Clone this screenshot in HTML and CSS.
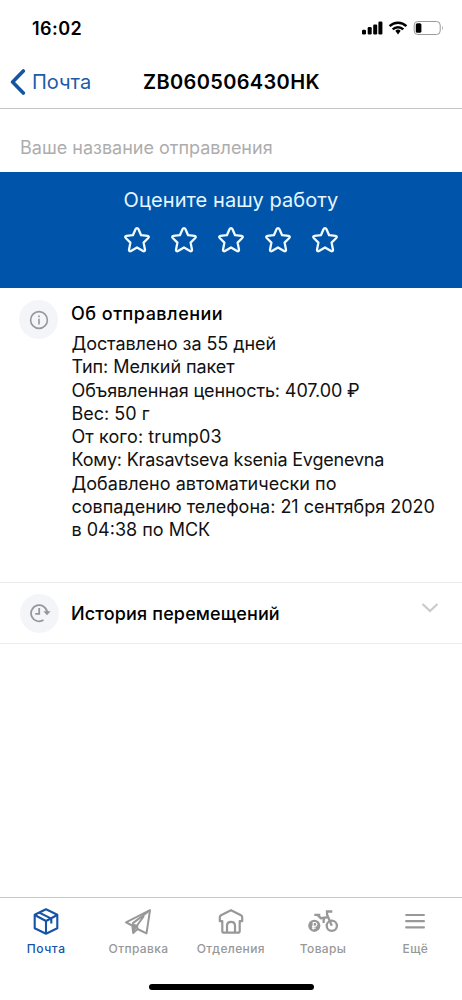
FILE: index.html
```html
<!DOCTYPE html>
<html lang="ru">
<head>
<meta charset="utf-8">
<meta name="viewport" content="width=device-width">
<title>Почта</title>
<link rel="stylesheet" href="styles.css">
</head>
<body>
<div class="screen">
  <div class="status">
    <span class="time">16:02</span>
    <svg class="status-icons" width="84" height="16" viewBox="0 0 84 16">
      <g fill="#000">
        <rect x="1" y="9.7" width="4" height="4.8" rx="1.2"/>
        <rect x="6.7" y="7" width="4" height="7.5" rx="1.2"/>
        <rect x="12.2" y="4.5" width="4" height="10" rx="1.2"/>
        <rect x="17.4" y="1.5" width="4" height="13" rx="1.2"/>
        <path d="M34.3 10.8a4 4 0 0 1 5.4 0L37 14.4z"/>
      </g>
      <g fill="none" stroke="#000" stroke-width="2.5">
        <path d="M28.6 6.1a12 12 0 0 1 16.8 0"/>
        <path d="M31.7 9.3a7.6 7.6 0 0 1 10.6 0"/>
      </g>
      <rect x="53.2" y="1.5" width="26" height="13" rx="3.6" fill="none" stroke="#999"/>
      <rect x="54.8" y="3.2" width="5.6" height="9.6" rx="1.6" fill="#000"/>
      <path d="M81 5.7q1.6 2.3 0 4.6z" fill="#888"/>
    </svg>
  </div>

  <header class="nav">
    <a class="back">
      <svg width="16" height="26" viewBox="0 0 16 26"><path d="M13.3 2L2.6 13l10.7 11" fill="none" stroke="#1554a0" stroke-width="3.6" stroke-linecap="round" stroke-linejoin="round"/></svg>
      <span>Почта</span>
    </a>
    <h1 class="title">ZB060506430HK</h1>
  </header>

  <div class="name-field">Ваше название отправления</div>

  <section class="rate">
    <div class="rate-title">Оцените нашу работу</div>
    <div class="stars">
      <svg class="star" viewBox="0 0 28 28"><use href="#star"/></svg>
      <svg class="star" viewBox="0 0 28 28"><use href="#star"/></svg>
      <svg class="star" viewBox="0 0 28 28"><path id="star" d="M14 2.2c.7 0 1.2.4 1.5 1l2.6 6 6.4.6c1.300.2 1.700 1.400.8 2.200l-4.700 4.600 1.400 7.100c.2 1.300-.9 2-2 1.400L14 21.500l-6 3.600c-1.100.6-2.200-.1-2-1.400l1.400-7.100L2.700 12c-.9-.8-.5-2 .8-2.200l6.400-.6 2.600-6c.3-.6.8-1 1.500-1z"/></svg>
      <svg class="star" viewBox="0 0 28 28"><use href="#star"/></svg>
      <svg class="star" viewBox="0 0 28 28"><use href="#star"/></svg>
    </div>
  </section>

  <section class="info">
    <div class="bubble">
      <svg width="20" height="20" viewBox="0 0 20 20" fill="none" stroke="#96969b" stroke-width="1.6"><circle cx="10" cy="10" r="8.4"/><path d="M10 8.7v5.7"/><path d="M10 5.4v1.9"/></svg>
    </div>
    <div class="info-body">
      <h2 class="info-title">Об отправлении</h2>
      <p class="l1">Доставлено за 55 дней</p>
      <p class="l2">Тип: Мелкий пакет</p>
      <p class="l3">Объявленная ценность: 407.00 ₽</p>
      <p class="l4">Вес: 50 г</p>
      <p class="l5">От кого: trump03</p>
      <p class="l6">Кому: Krasavtseva ksenia Evgenevna</p>
      <p class="l7">Добавлено автоматически по</p>
      <p class="l8">совпадению телефона: 21 сентября 2020</p>
      <p class="l9">в 04:38 по МСК</p>
    </div>
  </section>

  <section class="history">
    <div class="bubble">
      <svg width="22" height="20" viewBox="0 0 22 20" fill="none" stroke="#96969b" stroke-width="1.8"><path d="M14.5 17.1A8.100 8.100 0 1 1 18.200 9"/><path d="M10.200 5.100v5.700H6.200"/><path d="M14.400 8.200h7.200l-3.600 4z" fill="#96969b" stroke="none"/></svg>
    </div>
    <h2 class="history-title">История перемещений</h2>
    <svg class="chevron" width="18" height="12" viewBox="0 0 18 12"><path d="M1.500 2L9 9l7.500-7" fill="none" stroke="#cbcbcb" stroke-width="2.300"/></svg>
  </section>

  <nav class="tabs">
    <a class="tab active">
      <svg width="30" height="30" viewBox="0 0 30 30" fill="none" stroke="currentColor" stroke-width="2.100" stroke-linejoin="round"><path d="M15 2.200l11.300 5.500v13.600L15 26.700 3.700 21.300V7.700z"/><path d="M3.700 8L15 14 26.300 8M15 14v12.700M8.300 5.600l12 6v4.800"/></svg>
      <span class="t1">Почта</span>
    </a>
    <a class="tab">
      <svg width="30" height="30" viewBox="0 0 30 30" fill="none" stroke="currentColor" stroke-width="2" stroke-linejoin="round"><path d="M27 3.200L3 15.300l6.300 3.200.9 7.500 4.300-4 9 4.300z"/><path d="M27 3.200L9.300 16.600M21 9l-7 9.500.5 3.500"/><path d="M9.300 17l5.400 1.500-4.500 6.500z" fill="currentColor" stroke-width="1"/></svg>
      <span class="t2">Отправка</span>
    </a>
    <a class="tab">
      <svg width="30" height="30" viewBox="0 0 30 30" fill="none" stroke="currentColor" stroke-width="2.200" stroke-linejoin="round"><path d="M15 3.200L5 8.300q-1.200.7-1.200 2v3.900h2.500v9.700q0 1.700 1.700 1.700h14q1.700 0 1.700-1.700v-9.700h2.500v-3.900q0-1.300-1.200-2z"/><path d="M11 25.500v-6.700q0-4 4-4t4 4v6.700"/></svg>
      <span class="t3">Отделения</span>
    </a>
    <a class="tab">
      <svg width="32" height="30" viewBox="0 0 32 30" fill="none" stroke="currentColor" stroke-width="2.300"><circle cx="7.300" cy="18.800" r="6.100" fill="currentColor" stroke="none"/><circle cx="24.800" cy="18.800" r="5.100"/><path d="M24.800 18.800L20 7.500v-3h5.300M7.300 7.800h6M10.500 8l3.300 3.200 7.700-1M17.500 11q-1.200 1.500-.8 5"/><path d="M6.200 22.500v-7h1.700a1.800 1.800 0 0 1 0 3.900H5M5 21.100h3.600" stroke="#fff" stroke-width="1.100"/></svg>
      <span class="t4">Товары</span>
    </a>
    <a class="tab">
      <svg width="30" height="30" viewBox="0 0 30 30" fill="none" stroke="currentColor" stroke-width="2.200" stroke-linecap="round"><path d="M6.200 8h17.700M6.200 14.200h17.700M6.200 20.400h17.700"/></svg>
      <span class="t5">Ещё</span>
    </a>
  </nav>
  <div class="home"><div class="home-bar"></div></div>
</div>
</body>
</html>
```

FILE: styles.css
```css
* { box-sizing: border-box; }
body { margin: 0; background: #fff; color: #111; font-family: Inter, "Liberation Sans", sans-serif; }
h1, h2, p { margin: 0; }
svg { display: block; flex: none; }
span, h1, h2, p, .name-field, .rate-title { white-space: nowrap; }

.screen { width: 462px; height: 1000px; display: flex; flex-direction: column; }

.status { height: 56px; padding: 0 17px 0 32px; display: flex; justify-content: space-between; align-items: center; }
.time { font-size: 18px; font-weight: 600; color: #000; letter-spacing: .45px; }

.nav { height: 53px; border-bottom: 1px solid #c6c6c8; display: grid; grid-template-columns: 143px 1fr; align-items: center; }
.back { display: flex; align-items: center; gap: 6px; padding-left: 10px; font-size: 20px; color: #1b5ba8; }
.title { font-size: 20px; font-weight: 600; color: #000; letter-spacing: .36px; }

.name-field { height: 63px; padding: 15px 20px 0; line-height: 48px; font-size: 18px; color: #adadad; }

.rate { height: 116px; background: #0054a9; color: #e6f7ff; display: flex; flex-direction: column; align-items: center; padding-top: 15px; }
.rate-title { font-size: 20px; line-height: 26px; letter-spacing: .08px; }
.stars { display: flex; gap: 18.9px; margin-top: 13px; }
.star { width: 28px; height: 28px; fill: none; stroke: #f0faff; stroke-width: 2.3; stroke-linejoin: round; }

.info { height: 294px; padding: 13px 0 0 19px; display: flex; gap: 14px; }
.bubble { flex: none; width: 39px; height: 39px; border-radius: 50%; background: #f4f5f9; display: flex; align-items: center; justify-content: center; }
.info .bubble { margin-top: -1px; }
.info-title { font-size: 18px; font-weight: 500; line-height: 26px; margin-bottom: 5px; margin-left: -1px; letter-spacing: .5px; color: #000; }
.info-body p { font-size: 18px; line-height: 23.3px; margin-left: -.5px; }
.info-body .l1, .info-body .l2 { letter-spacing: -.07px; }
.info-body .l3 { letter-spacing: -.12px; }
.info-body .l5 { letter-spacing: .1px; }
.info-body .l6 { letter-spacing: -.2px; }
.info-body .l7 { letter-spacing: .03px; }

.history { height: 62px; padding: 0 23px 0 20px; border: solid #ececec; border-width: 1px 0; display: flex; align-items: center; gap: 12px; }
.history-title { font-size: 18px; font-weight: 500; color: #000; letter-spacing: .15px; }
.chevron { margin: 0 0 11px auto; }

.tabs { margin-top: auto; height: 73px; border-top: 1px solid #c8c8c8; display: grid; grid-template-columns: repeat(5, 92.3px); padding-top: 9px; }
.tab { display: flex; flex-direction: column; align-items: center; gap: 3px; color: #989898; font-size: 12px; font-weight: 500; line-height: 17px; letter-spacing: .35px; }
.active { color: #1554a6; letter-spacing: .6px; }

.home { height: 30px; display: flex; justify-content: center; padding-top: 14px; }
.home-bar { width: 165px; height: 6px; border-radius: 3px; background: #000; }
```
